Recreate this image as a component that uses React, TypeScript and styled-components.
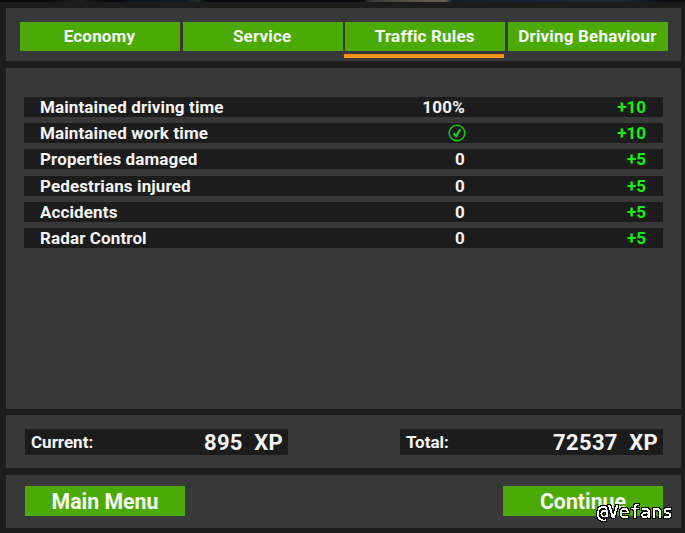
import React from "react";
import styled, { createGlobalStyle } from "styled-components";

const Global = createGlobalStyle`
  html, body { margin: 0; padding: 0; background: #1c1c1c; }
  body { font-family: Roboto, "Liberation Sans", sans-serif; color: #f4f4f4; }
`;
const Screen = styled.div`
  width: 685px; height: 533px; box-sizing: border-box; overflow: hidden; position: relative;
  background: #1c1c1c; display: flex; flex-direction: column;
`;
const TopStrip = styled.div`
  height: 2px; flex: none;
  background: linear-gradient(90deg, #0b0b0d 0 7%, #1f1f1f 12%, #16161a 13%, #08080c 17%, #0c1424 19%, #0c1a30 27%, #20301a 29%, #08080e 30%, #08080e 53%, #3a3834 54%, #6a6454 65%, #10202c 66%, #12243a 76%, #1c2c40 90%, #0c0e12 97%);
`;
const Stack = styled.div`
  flex: 1; display: flex; flex-direction: column; gap: 6px; padding: 6px 4px 5px 6px;
`;
const Panel = styled.section`
  background: #383838;
`;
const TabsPanel = styled(Panel)`
  height: 53px; box-sizing: border-box; padding: 14px 0 0 14px; margin-bottom: 1px;
  display: grid; grid-template-columns: repeat(4, 160px); column-gap: 2.67px;
`;
const TabItem = styled.div`
  display: flex; flex-direction: column; gap: 3px; align-items: flex-start;
`;
const Tab = styled.div`
  width: 160px; height: 29px; box-sizing: border-box; padding: 0 1px 1px 0; background: #4caa06; color: #f6f6f6;
  font-size: 17px; font-weight: 700; display: flex; align-items: center; justify-content: center;
  letter-spacing: 0.18px; white-space: nowrap;
`;
const Underline = styled.div`
  width: 160px; height: 4px; background: #f39314; margin-left: -1px;
`;
const RowsPanel = styled(Panel)`
  height: 341px; box-sizing: border-box; padding: 29px 18px 0 18px;
  display: flex; flex-direction: column; gap: 6.2px;
`;
const Row = styled.div`
  height: 20px; background: #1c1c1c; display: grid;
  grid-template-columns: 1fr 60px 181px; align-items: center;
  font-size: 17px; font-weight: 700; padding-left: 16px; padding-right: 17px;
`;
const Value = styled.span`
  justify-self: end; display: flex; letter-spacing: 0.2px;
`;
const Points = styled.span`
  justify-self: end; color: #14f014; font-size: 17px;
`;
const Label = styled.span`
  letter-spacing: 0.12px; white-space: nowrap;
`;
const TotalsPanel = styled(Panel)`
  height: 53px; box-sizing: border-box; padding: 14px 18px 0 19px; margin-bottom: 1px;
  display: flex; justify-content: space-between; align-items: flex-start;
`;
const Counter = styled.div`
  width: 263px; height: 26px; background: #1c1c1c; display: flex; align-items: center;
  justify-content: space-between; padding: 0 5px 0 6px; box-sizing: border-box;
`;
const CounterLabel = styled.span`
  font-size: 17px; font-weight: 700;
`;
const CounterValue = styled.span`
  font-size: 22px; font-weight: 700; letter-spacing: 0.3px; white-space: pre;
`;
const ActionsPanel = styled(Panel)`
  height: 53px; box-sizing: border-box; padding: 11px 18px 0 19px;
  display: flex; justify-content: space-between; align-items: flex-start;
`;
const ActionButton = styled.div`
  width: 160px; height: 30px; background: #4caa06; color: #f6f6f6; font-size: 21.3px; font-weight: 700;
  display: flex; align-items: center; justify-content: center;
`;
const Watermark = styled.div`
  position: absolute; left: 597px; top: 501px; font-family: "DejaVu Sans Mono", monospace;
  font-size: 18px; line-height: 22px; color: #fff; white-space: nowrap;
  filter: url(#pixel-outline);
`;
const FilterDefs = styled.svg`
  position: absolute; width: 0; height: 0;
`;

const CheckIcon = () => (
  <svg width="18" height="18" viewBox="0 0 18 18" fill="none" style={{ marginRight: -1 }}>
    <circle cx="9" cy="9" r="7.8" stroke="#10cc10" strokeWidth="1.5" />
    <path d="M5.6 9.2 8 12.2 12.2 5.4" strokeWidth="2" stroke="#16dc16" />
  </svg>
);

const rows: { name: string; value: React.ReactNode; pts: string }[] = [
  { name: "Maintained driving time", value: "100%", pts: "+10" },
  { name: "Maintained work time", value: <CheckIcon />, pts: "+10" },
  { name: "Properties damaged", value: "0", pts: "+5" },
  { name: "Pedestrians injured", value: "0", pts: "+5" },
  { name: "Accidents", value: "0", pts: "+5" },
  { name: "Radar Control", value: "0", pts: "+5" },
];
const tabs = ["Economy", "Service", "Traffic Rules", "Driving Behaviour"];

export default function App() {
  return (
    <Screen>
      <Global />
      <FilterDefs aria-hidden="true">
        <filter id="pixel-outline" x="-10%" y="-30%" width="120%" height="160%" colorInterpolationFilters="sRGB">
          <feComponentTransfer in="SourceGraphic" result="hard">
            <feFuncA type="discrete" tableValues="0 1 1" />
          </feComponentTransfer>
          <feMorphology in="hard" operator="dilate" radius="1" result="fat" />
          <feFlood floodColor="#000" />
          <feComposite in2="fat" operator="in" result="outline" />
          <feMerge>
            <feMergeNode in="outline" />
            <feMergeNode in="hard" />
          </feMerge>
        </filter>
      </FilterDefs>
      <TopStrip />
      <Stack>
        <TabsPanel>
          {tabs.map((t) => (
            <TabItem key={t}>
              <Tab>{t}</Tab>
              {t === "Traffic Rules" && <Underline />}
            </TabItem>
          ))}
        </TabsPanel>
        <RowsPanel>
          {rows.map((r) => (
            <Row key={r.name}>
              <Label>{r.name}</Label>
              <Value>{r.value}</Value>
              <Points>{r.pts}</Points>
            </Row>
          ))}
        </RowsPanel>
        <TotalsPanel>
          <Counter>
            <CounterLabel>Current:</CounterLabel>
            <CounterValue>895  XP</CounterValue>
          </Counter>
          <Counter>
            <CounterLabel>Total:</CounterLabel>
            <CounterValue>72537  XP</CounterValue>
          </Counter>
        </TotalsPanel>
        <ActionsPanel>
          <ActionButton>Main Menu</ActionButton>
          <ActionButton>Continue</ActionButton>
        </ActionsPanel>
      </Stack>
      <Watermark>@Vefans</Watermark>
    </Screen>
  );
}
